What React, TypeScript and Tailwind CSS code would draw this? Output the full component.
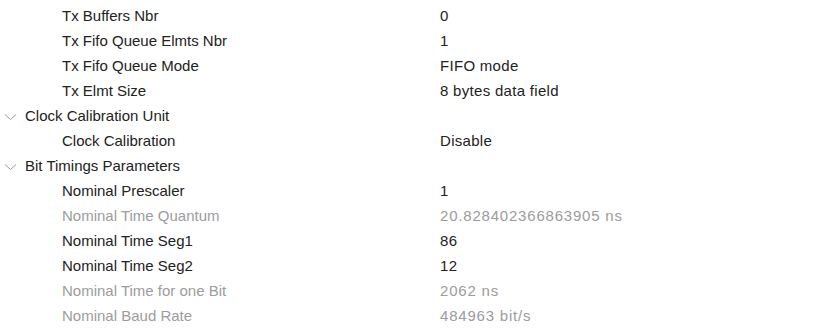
type Row = {
  label: string;
  value?: string;
  level: 0 | 1;
  muted?: boolean;
  wide?: boolean;
};

const ROWS: Row[] = [
  { label: "Tx Buffers Nbr", value: "0", level: 1 },
  { label: "Tx Fifo Queue Elmts Nbr", value: "1", level: 1 },
  { label: "Tx Fifo Queue Mode", value: "FIFO mode", level: 1 },
  { label: "Tx Elmt Size", value: "8 bytes data field", level: 1 },
  { label: "Clock Calibration Unit", level: 0 },
  { label: "Clock Calibration", value: "Disable", level: 1 },
  { label: "Bit Timings Parameters", level: 0 },
  { label: "Nominal Prescaler", value: "1", level: 1 },
  { label: "Nominal Time Quantum", value: "20.828402366863905 ns", level: 1, muted: true, wide: true },
  { label: "Nominal Time Seg1", value: "86", level: 1 },
  { label: "Nominal Time Seg2", value: "12", level: 1 },
  { label: "Nominal Time for one Bit", value: "2062 ns", level: 1, muted: true, wide: true },
  { label: "Nominal Baud Rate", value: "484963 bit/s", level: 1, muted: true, wide: true },
];

function Chevron() {
  return (
    <svg width="13" height="8" viewBox="0 0 13 8" className="text-[#9a9a9a]">
      <path d="M1 1.5 L6.5 6.5 L12 1.5" fill="none" stroke="currentColor" strokeWidth="1" />
    </svg>
  );
}

export default function App() {
  return (
    <div
      className="w-[817px] h-[332px] overflow-hidden bg-white pt-[4px] text-[15px] text-[#222222]"
      style={{ fontFamily: '"Liberation Sans", Arial, sans-serif' }}
    >
      {ROWS.map((row, i) => (
        <div key={i} className="flex h-[25px] items-center">
          {row.level === 0 ? (
            <div className="flex items-center">
              <span className="ml-[4px] mr-[8px] flex w-[13px] items-center">
                <Chevron />
              </span>
              <span>{row.label}</span>
            </div>
          ) : (
            <>
              <span className={`w-[440px] shrink-0 pl-[62px] ${row.muted ? "text-[#9c9c9c]" : ""}`}>
                {row.label}
              </span>
              <span
                className={`${row.wide ? "tracking-[0.8px]" : "tracking-[0.3px]"} ${
                  row.muted ? "text-[#9c9c9c]" : ""
                }`}
              >
                {row.value}
              </span>
            </>
          )}
        </div>
      ))}
    </div>
  );
}
